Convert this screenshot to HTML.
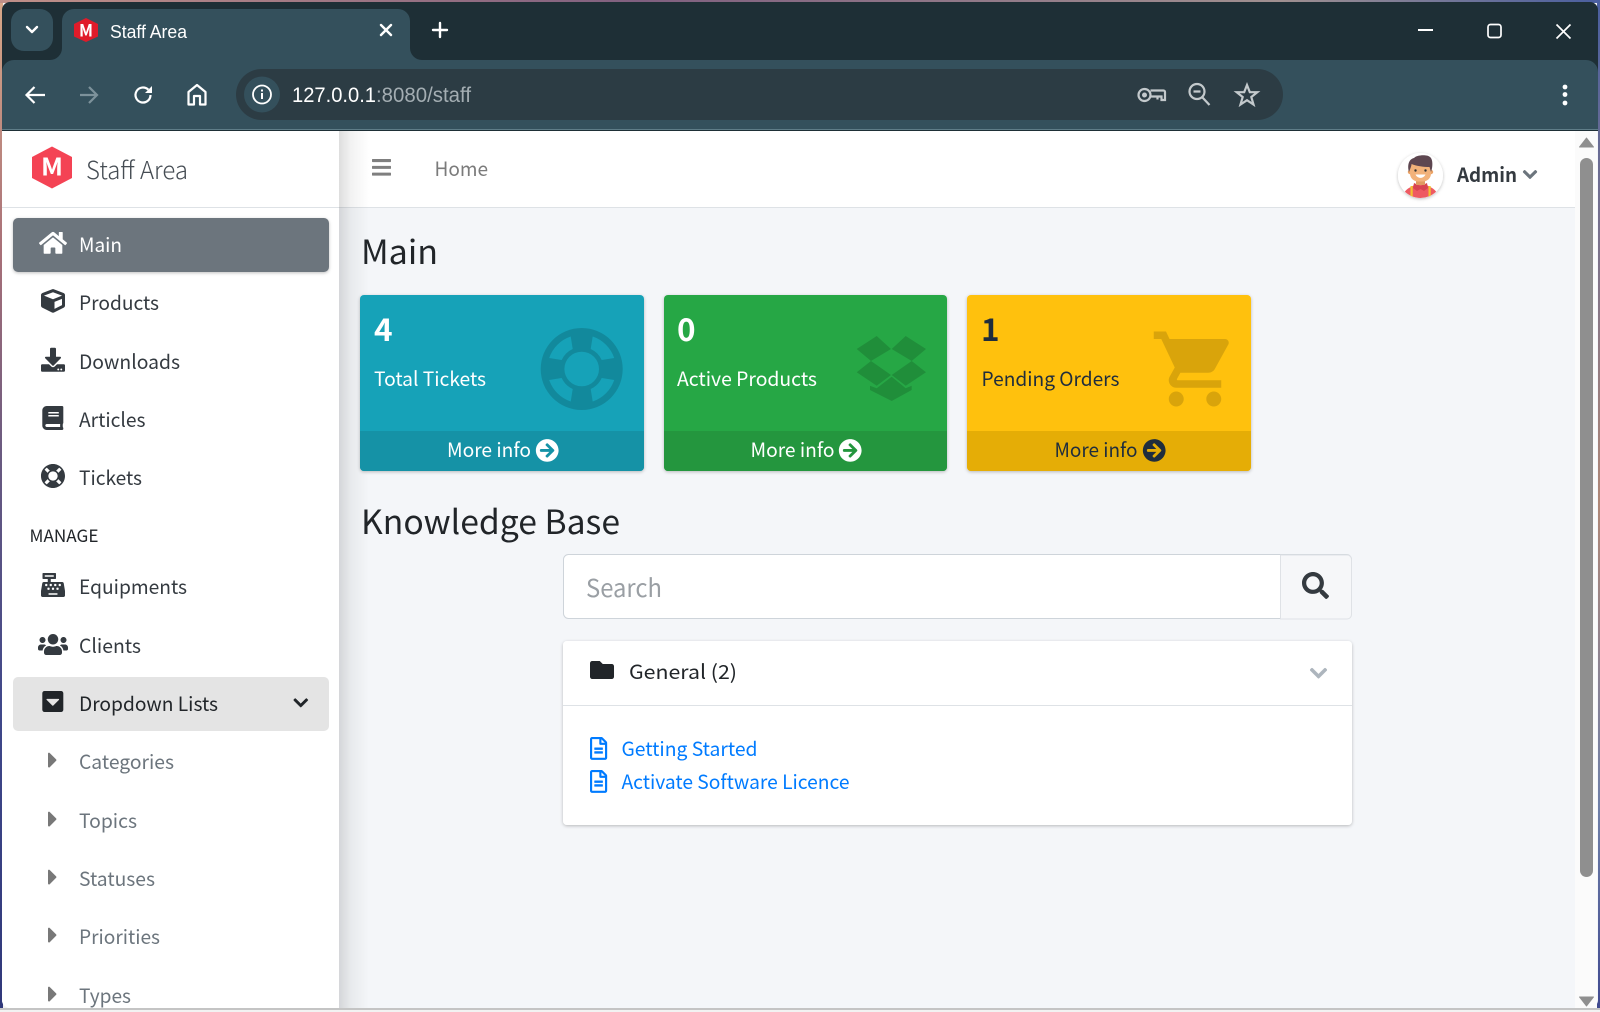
<!DOCTYPE html>
<html><head><meta charset="utf-8"><title>Staff Area</title>
<style>
html,body{margin:0;padding:0;width:1600px;height:1012px;overflow:hidden;background:#fff}
svg{display:block}
text{font-family:"Noto Sans CJK JP","Liberation Sans",sans-serif;font-size:19.7px;fill:#343a40}
.c text{font-family:"Liberation Sans",sans-serif}
</style></head><body>
<svg width="1600" height="1012" viewBox="0 0 1600 1012" xmlns="http://www.w3.org/2000/svg">
<defs>
<linearGradient id="wl" x1="0" y1="0" x2="0" y2="1"><stop offset="0" stop-color="#d8a888"/><stop offset=".25" stop-color="#a87078"/><stop offset=".45" stop-color="#6a5a80"/><stop offset=".7" stop-color="#40488a"/><stop offset="1" stop-color="#30387a"/></linearGradient>
<linearGradient id="wr" x1="0" y1="0" x2="0" y2="1"><stop offset="0" stop-color="#4a5fa0"/><stop offset=".5" stop-color="#b08878"/><stop offset=".8" stop-color="#7080a8"/><stop offset="1" stop-color="#404a90"/></linearGradient>
<linearGradient id="wt" x1="0" y1="0" x2="1" y2="0"><stop offset="0" stop-color="#c09088"/><stop offset=".4" stop-color="#806080"/><stop offset=".8" stop-color="#a09090"/><stop offset="1" stop-color="#4a5fa0"/></linearGradient>
<linearGradient id="sh" x1="0" y1="0" x2="1" y2="0"><stop offset="0" stop-color="#000" stop-opacity=".13"/><stop offset=".4" stop-color="#000" stop-opacity=".05"/><stop offset="1" stop-color="#000" stop-opacity="0"/></linearGradient>
<filter id="ds" x="-5%" y="-5%" width="110%" height="115%"><feDropShadow dx="0" dy="1" stdDeviation="1.5" flood-color="#000" flood-opacity=".25"/></filter>
<clipPath id="win"><path d="M2 10a8 8 0 0 1 8-8H1590a8 8 0 0 1 8 8V1000a8 8 0 0 1-8 8H10a8 8 0 0 1-8-8z"/></clipPath>
<clipPath id="av"><circle cx="1420.5" cy="175.5" r="22.5"/></clipPath>
<clipPath id="sb"><rect x="0" y="131" width="339" height="877"/></clipPath>
</defs>

<rect width="1600" height="1012" fill="#f2f2f2"/>
<rect x="0" y="0" width="3" height="1008" fill="url(#wl)"/>
<rect x="1597" y="0" width="3" height="1008" fill="url(#wr)"/>
<rect x="0" y="0" width="1600" height="3" fill="url(#wt)"/>

<g clip-path="url(#win)">
<rect x="0" y="0" width="1600" height="60" fill="#1e2f36"/>
<rect x="0" y="60" width="1600" height="71" fill="#34505c"/>
<path d="M2 60v12a12 12 0 0 1 12-12zM1598 60v12a12 12 0 0 0-12-12z" fill="#1e2f36"/>
<rect x="0" y="129" width="1600" height="1" fill="#5f7d88"/>
<rect x="0" y="130" width="1600" height="1" fill="#1e2f36"/>

<!-- content bg -->
<rect x="0" y="131" width="1600" height="877" fill="#f4f6f9"/>
<rect x="339" y="131" width="1236" height="76" fill="#fff"/>
<rect x="339" y="207" width="1236" height="1" fill="#dee2e6"/>
<rect x="339" y="131" width="30" height="877" fill="url(#sh)"/>
<rect x="0" y="131" width="339" height="877" fill="#fff"/>
</g>

<!-- chrome tabs -->
<rect x="11" y="9" width="42" height="42" rx="13" fill="#34505c"/>
<path d="M27 27l5 5 5-5" fill="none" stroke="#fff" stroke-width="2.4" stroke-linecap="round" stroke-linejoin="round"/>
<path d="M50 60a12 12 0 0 0 12-12V21a12 12 0 0 1 12-12H398a12 12 0 0 1 12 12V48a12 12 0 0 0 12 12z" fill="#34505c"/>
<path d="M86 18l12 6v12.500L86 42l-12-5.500V24z" fill="#e01b2a"/>
<text x="79" y="36.500" style="font-size:17px;font-weight:700;fill:#fff" textLength="14" lengthAdjust="spacingAndGlyphs">M</text>
<g class="c"><text x="110" y="38" style="font-size:18.400px;fill:#fff" textLength="77" lengthAdjust="spacingAndGlyphs">Staff Area</text></g>
<path d="M381 25l10 10M391 25l-10 10" stroke="#fff" stroke-width="2.400" stroke-linecap="round"/>
<path d="M440 23v14M433 30h14" stroke="#fff" stroke-width="2.400" stroke-linecap="round"/>

<!-- window controls -->
<rect x="1418" y="29" width="15" height="2" fill="#fff"/>
<rect x="1488" y="24.500" width="13" height="13" rx="2.500" fill="none" stroke="#fff" stroke-width="1.700"/>
<path d="M1556.500 24.500l14 14M1570.500 24.500l-14 14" stroke="#fff" stroke-width="1.700"/>

<!-- toolbar -->
<path d="M45 95H27M34.500 87l-8 8 8 8" fill="none" stroke="#fff" stroke-width="2.200"/>
<path d="M80 95h17M89 87l8 8-8 8" fill="none" stroke="#7d929b" stroke-width="2.200"/>
<path d="M150.500 95a7.500 7.500 0 1 1-2.200-5.300" fill="none" stroke="#fff" stroke-width="2.200"/>
<path d="M152 86v7h-7z" fill="#fff"/>
<path d="M188.500 92l8.500-7 8.500 7v12.500H200V96h-6v8.500h-5.500z" fill="none" stroke="#fff" stroke-width="2.200" stroke-linejoin="round"/>
<rect x="236" y="69" width="1047" height="51" rx="25.500" fill="#2c3c44"/>
<circle cx="262" cy="94.500" r="18" fill="#34505c"/>
<circle cx="262" cy="94.500" r="9" fill="none" stroke="#fff" stroke-width="1.800"/>
<rect x="261" y="93" width="2" height="6" fill="#fff"/><rect x="261" y="89.500" width="2" height="2" fill="#fff"/>
<g class="c"><text x="292" y="102" style="font-size:21.500px;fill:#fff" textLength="84" lengthAdjust="spacingAndGlyphs">127.0.0.1</text>
<text x="376" y="102" style="font-size:21.500px;fill:#a3adb2" textLength="95" lengthAdjust="spacingAndGlyphs">:8080/staff</text></g>
<g fill="none" stroke="#c3c9cc" stroke-width="2.200">
<circle cx="1144.500" cy="95" r="6"/><circle cx="1144.500" cy="95" r="1.400" fill="#c3c9cc"/><path d="M1150.500 90.500h13a1.500 1.500 0 0 1 1.500 1.500v8h-3.500v-3.500h-4v3M1150.500 96.500h7"/>
<circle cx="1197" cy="91.500" r="7.500"/><path d="M1193.500 91.500h7M1202.500 97.500l7 7.500"/>
<path d="M1247 85l2.800 7.200h7.500l-6 4.800 2.200 7.500-6.500-4.300-6.500 4.300 2.200-7.500-6-4.800h7.500z"/>
</g>
<circle cx="1565" cy="87" r="2.400" fill="#fff"/><circle cx="1565" cy="94.500" r="2.400" fill="#fff"/><circle cx="1565" cy="103" r="2.400" fill="#fff"/>

<!-- navbar -->
<path transform="translate(372,156.500) scale(.0424)" fill="#7f7f7f" d="M16 132h416c8.837 0 16-7.163 16-16V76c0-8.837-7.163-16-16-16H16C7.163 60 0 67.163 0 76v40c0 8.837 7.163 16 16 16zm0 160h416c8.837 0 16-7.163 16-16v-40c0-8.837-7.163-16-16-16H16c-8.837 0-16 7.163-16 16v40c0 8.837 7.163 16 16 16zm0 160h416c8.837 0 16-7.163 16-16v-40c0-8.837-7.163-16-16-16H16c-8.837 0-16 7.163-16 16v40c0 8.837 7.163 16 16 16z"/>
<text x="434.500" y="176" style="fill:#7b7b7b" textLength="53.500" lengthAdjust="spacingAndGlyphs">Home</text>

<circle cx="1420.500" cy="175.500" r="22.500" fill="#fff" filter="url(#ds)"/>
<g clip-path="url(#av)">
<path d="M1402 199c1-6 4-10 9-12l5-3h9l5 3c5 2 8 6 9 12z" fill="#ee5a62"/>
<rect x="1410.500" y="186" width="2.200" height="14" fill="#f2c230"/><rect x="1428.500" y="186" width="2.200" height="14" fill="#f2c230"/>
<path d="M1414 183l6.500 3 6.500-3 1 5-4 3-3.500-2-3.500 2-4-3z" fill="#d84450"/>
<rect x="1416" y="176" width="9" height="9" fill="#e09a60"/>
<circle cx="1410" cy="172" r="2.200" fill="#eba467"/><circle cx="1431" cy="172" r="2.200" fill="#eba467"/>
<rect x="1410" y="160" width="21" height="21.500" rx="8" fill="#f2b27a"/>
<path d="M1409 172c-2-7 0-13 5-14 2-3 13-4 16-1 3 2 3 10 1 15l-1.500-5c-6 0-13-1-18-3 0 2-1 4-2.500 8z" fill="#5d4650"/>
<circle cx="1415.500" cy="170.500" r="1.200" fill="#333"/><circle cx="1425.500" cy="170.500" r="1.200" fill="#333"/>
<path d="M1415.500 174.500c2 4.500 8 4.500 10 0z" fill="#fff"/>
</g>
<text x="1457" y="182" style="font-weight:700;fill:#343a40" textLength="60" lengthAdjust="spacingAndGlyphs">Admin</text>
<path transform="translate(1523,166.500) scale(.0313)" fill="#6c757d" stroke="#6c757d" stroke-width="20" d="M207.029 381.476L12.686 187.132c-9.373-9.373-9.373-24.569 0-33.941l22.667-22.667c9.357-9.357 24.522-9.375 33.901-.04L224 284.505l154.745-154.021c9.379-9.335 24.544-9.317 33.901.04l22.667 22.667c9.373 9.373 9.373 24.569 0 33.941L240.971 381.476c-9.373 9.372-24.569 9.372-33.942 0z"/>

<!-- sidebar -->
<path d="M52 146.500l20 10.500v21L52 188.500 32 178v-21z" fill="#f44354"/>
<text x="41" y="175.500" style="font-size:24.500px;font-weight:700;fill:#fff" textLength="22" lengthAdjust="spacingAndGlyphs">M</text>
<text x="86" y="179" style="font-size:24.500px;font-weight:300;fill:#454c53" textLength="102" lengthAdjust="spacingAndGlyphs">Staff Area</text>
<rect x="2" y="207" width="337" height="1" fill="#dee2e6"/>
<rect x="13" y="218" width="316" height="54" rx="5" fill="#6c757d" filter="url(#ds)"/>
<path transform="translate(39,230.400) scale(.0486)" fill="#fff" d="M280.370 148.260L96 300.110V464a16 16 0 0 0 16 16l112.060-.29a16 16 0 0 0 15.920-16V368a16 16 0 0 1 16-16h64a16 16 0 0 1 16 16v95.640a16 16 0 0 0 16 16.050L464 480a16 16 0 0 0 16-16V300L295.670 148.260a12.190 12.190 0 0 0-15.300 0zM571.600 251.470L488 182.560V44.050a12 12 0 0 0-12-12h-56a12 12 0 0 0-12 12v72.610L318.470 43a48 48 0 0 0-61 0L4.340 251.470a12 12 0 0 0-1.600 16.900l25.500 31A12 12 0 0 0 45.150 301l235.220-193.740a12.190 12.190 0 0 1 15.300 0L530.900 301a12 12 0 0 0 16.900-1.600l25.500-31a12 12 0 0 0-1.700-16.930z"/>
<text x="79" y="252" style="fill:#fff" textLength="43" lengthAdjust="spacingAndGlyphs">Main</text>

<path transform="translate(41,289) scale(.0469)" fill="#343a40" d="M239.100 6.300l-208 78c-18.700 7-31.100 25-31.100 45v225.100c0 18.200 10.300 34.800 26.500 42.900l208 104c13.500 6.800 29.400 6.800 42.900 0l208-104c16.300-8.100 26.500-24.800 26.500-42.900V129.300c0-20-12.400-37.900-31.100-44.900l-208-78C262 2.200 250 2.200 239.100 6.300zM256 68.400l192 72v1.100l-192 78-192-78v-1.100l192-72zm32 356V275.500l160-65v133.900l-160 80z"/>
<text x="79" y="310" textLength="80" lengthAdjust="spacingAndGlyphs">Products</text>

<path transform="translate(41,347.700) scale(.0469)" fill="#343a40" d="M216 0h80c13.300 0 24 10.700 24 24v168h87.700c17.800 0 26.700 21.500 14.100 34.100L269.700 378.300c-7.500 7.500-19.800 7.500-27.300 0L90.100 226.100c-12.600-12.600-3.700-34.100 14.100-34.100H192V24c0-13.300 10.700-24 24-24zm296 376v112c0 13.300-10.700 24-24 24H24c-13.300 0-24-10.700-24-24V376c0-13.300 10.700-24 24-24h146.700l49 49c20.100 20.100 52.500 20.100 72.600 0l49-49H488c13.300 0 24 10.700 24 24zm-124 88c0-11-9-20-20-20s-20 9-20 20 9 20 20 20 20-9 20-20zm64 0c0-11-9-20-20-20s-20 9-20 20 9 20 20 20 20-9 20-20z"/>
<text x="79" y="369" textLength="101" lengthAdjust="spacingAndGlyphs">Downloads</text>

<path transform="translate(42.300,406) scale(.0469)" fill="#343a40" d="M448 360V24c0-13.300-10.700-24-24-24H96C43 0 0 43 0 96v320c0 53 43 96 96 96h328c13.300 0 24-10.700 24-24v-16c0-7.500-3.500-14.300-8.900-18.700-4.200-15.400-4.200-59.300 0-74.700 5.400-4.300 8.900-11.100 8.900-18.600zM128 134c0-3.300 2.700-6 6-6h212c3.300 0 6 2.700 6 6v20c0 3.300-2.700 6-6 6H134c-3.300 0-6-2.700-6-6v-20zm0 64c0-3.300 2.700-6 6-6h212c3.300 0 6 2.700 6 6v20c0 3.300-2.700 6-6 6H134c-3.300 0-6-2.700-6-6v-20zm253.400 250H96c-17.700 0-32-14.300-32-32 0-17.600 14.400-32 32-32h285.400c-1.900 17.100-1.900 46.900 0 64z"/>
<text x="79" y="427" textLength="66.500" lengthAdjust="spacingAndGlyphs">Articles</text>

<path transform="translate(40.600,463.600) scale(.0484)" fill="#343a40" d="M256 8C119.033 8 8 119.033 8 256s111.033 248 248 248 248-111.033 248-248S392.967 8 256 8zm173.696 119.559l-63.399 63.399c-10.987-18.559-26.670-34.252-45.255-45.255l63.399-63.399a218.396 218.396 0 0 1 45.255 45.255zM256 352c-53.019 0-96-42.981-96-96s42.981-96 96-96 96 42.981 96 96-42.981 96-96 96zM127.559 82.304l63.399 63.399c-18.559 10.987-34.252 26.670-45.255 45.255l-63.399-63.399a218.372 218.372 0 0 1 45.255-45.255zM82.304 384.441l63.399-63.399c10.987 18.559 26.670 34.252 45.255 45.255l-63.399 63.399a218.396 218.396 0 0 1-45.255-45.255zm302.137 45.255l-63.399-63.399c18.559-10.987 34.252-26.670 45.255-45.255l63.399 63.399a218.403 218.403 0 0 1-45.255 45.255z"/>
<text x="79" y="485" textLength="63" lengthAdjust="spacingAndGlyphs">Tickets</text>

<text x="29.500" y="542" style="font-size:17px;fill:#212529" textLength="69" lengthAdjust="spacingAndGlyphs">MANAGE</text>

<path transform="translate(41,573) scale(.0469)" fill="#343a40" d="M511.100 378.800l-26.700-160c-2.600-15.400-15.900-26.700-31.600-26.700H208v-64h96c8.800 0 16-7.200 16-16V16c0-8.800-7.200-16-16-16H48c-8.800 0-16 7.200-16 16v96c0 8.800 7.200 16 16 16h96v64H59.100c-15.600 0-29 11.300-31.600 26.700L.8 378.700c-.5 2.900-.8 5.900-.8 8.900V480c0 17.700 14.300 32 32 32h448c17.700 0 32-14.300 32-32v-92.400c0-3-.3-5.900-.9-8.800zM280 248c0-8.800 7.200-16 16-16h16c8.800 0 16 7.200 16 16v16c0 8.800-7.200 16-16 16h-16c-8.800 0-16-7.200-16-16v-16zm-32 64h16c8.800 0 16 7.200 16 16v16c0 8.800-7.200 16-16 16h-16c-8.800 0-16-7.200-16-16v-16c0-8.800 7.200-16 16-16zm-32-80c8.800 0 16 7.200 16 16v16c0 8.800-7.200 16-16 16h-16c-8.800 0-16-7.200-16-16v-16c0-8.800 7.200-16 16-16h16zM80 80V48h192v32H80zm40 200h-16c-8.800 0-16-7.200-16-16v-16c0-8.800 7.200-16 16-16h16c8.800 0 16 7.200 16 16v16c0 8.800-7.200 16-16 16zm16 64v-16c0-8.800 7.200-16 16-16h16c8.800 0 16 7.200 16 16v16c0 8.800-7.200 16-16 16h-16c-8.800 0-16-7.200-16-16zm216 112c0 4.400-3.600 8-8 8H168c-4.400 0-8-3.600-8-8v-16c0-4.400 3.600-8 8-8h176c4.400 0 8 3.600 8 8v16zm24-112c0 8.800-7.200 16-16 16h-16c-8.800 0-16-7.200-16-16v-16c0-8.800 7.200-16 16-16h16c8.800 0 16 7.200 16 16v16zm48-80c0 8.800-7.200 16-16 16h-16c-8.800 0-16-7.200-16-16v-16c0-8.800 7.200-16 16-16h16c8.800 0 16 7.200 16 16v16z"/>
<text x="79" y="594" textLength="108" lengthAdjust="spacingAndGlyphs">Equipments</text>

<path transform="translate(38,632.500) scale(.0469)" fill="#343a40" d="M96 224c35.300 0 64-28.700 64-64s-28.700-64-64-64-64 28.700-64 64 28.700 64 64 64zm448 0c35.300 0 64-28.700 64-64s-28.700-64-64-64-64 28.700-64 64 28.700 64 64 64zm32 32h-64c-17.600 0-33.500 7.100-45.100 18.600 40.300 22.100 68.900 62 75.100 109.400h66c17.700 0 32-14.300 32-32v-32c0-35.300-28.700-64-64-64zm-256 0c61.900 0 112-50.100 112-112S381.900 32 320 32 208 82.100 208 144s50.100 112 112 112zm76.800 32h-8.300c-20.800 10-43.900 16-68.500 16s-47.600-6-68.500-16h-8.300C179.600 288 128 339.600 128 403.200V432c0 26.500 21.500 48 48 48h288c26.500 0 48-21.500 48-48v-28.800c0-63.600-51.600-115.200-115.200-115.200zm-223.700-13.400C161.500 263.100 145.600 256 128 256H64c-35.300 0-64 28.700-64 64v32c0 17.700 14.300 32 32 32h65.900c6.300-47.400 34.900-87.300 75.200-109.400z"/>
<text x="79" y="653" textLength="62" lengthAdjust="spacingAndGlyphs">Clients</text>

<rect x="13" y="677" width="316" height="54" rx="5" fill="#e4e4e4"/>
<path transform="translate(42.300,689.500) scale(.0469)" fill="#212529" d="M448 80v352c0 26.510-21.490 48-48 48H48c-26.510 0-48-21.490-48-48V80c0-26.510 21.490-48 48-48h352c26.510 0 48 21.490 48 48zM92.500 220.500l123 123c4.700 4.700 12.300 4.700 17 0l123-123c7.600-7.600 2.200-20.500-8.500-20.500H101c-10.700 0-16.100 12.900-8.500 20.500z"/>
<text x="79" y="711" style="fill:#212529" textLength="139" lengthAdjust="spacingAndGlyphs">Dropdown Lists</text>
<path transform="translate(293.500,694.500) scale(.0325)" fill="#212529" stroke="#212529" stroke-width="14" d="M207.029 381.476L12.686 187.132c-9.373-9.373-9.373-24.569 0-33.941l22.667-22.667c9.357-9.357 24.522-9.375 33.901-.04L224 284.505l154.745-154.021c9.379-9.335 24.544-9.317 33.901.04l22.667 22.667c9.373 9.373 9.373 24.569 0 33.941L240.971 381.476c-9.373 9.372-24.569 9.372-33.942 0z"/>

<g clip-path="url(#sb)">
<g fill="#787878">
<path transform="translate(48,747.300) scale(.05)" d="M0 384.662V127.338c0-17.818 21.543-26.741 34.142-14.142l128.662 128.662c7.810 7.810 7.810 20.474 0 28.284L34.142 398.804C21.543 411.404 0 402.480 0 384.662z"/>
<path transform="translate(48,806.300) scale(.05)" d="M0 384.662V127.338c0-17.818 21.543-26.741 34.142-14.142l128.662 128.662c7.810 7.810 7.810 20.474 0 28.284L34.142 398.804C21.543 411.404 0 402.480 0 384.662z"/>
<path transform="translate(48,864.300) scale(.05)" d="M0 384.662V127.338c0-17.818 21.543-26.741 34.142-14.142l128.662 128.662c7.810 7.810 7.810 20.474 0 28.284L34.142 398.804C21.543 411.404 0 402.480 0 384.662z"/>
<path transform="translate(48,922.300) scale(.05)" d="M0 384.662V127.338c0-17.818 21.543-26.741 34.142-14.142l128.662 128.662c7.810 7.810 7.810 20.474 0 28.284L34.142 398.804C21.543 411.404 0 402.480 0 384.662z"/>
<path transform="translate(48,981.300) scale(.05)" d="M0 384.662V127.338c0-17.818 21.543-26.741 34.142-14.142l128.662 128.662c7.810 7.810 7.810 20.474 0 28.284L34.142 398.804C21.543 411.404 0 402.480 0 384.662z"/>
</g>
<text x="79" y="769" style="fill:#6c757d" textLength="95" lengthAdjust="spacingAndGlyphs">Categories</text>
<text x="79" y="828" style="fill:#6c757d" textLength="58" lengthAdjust="spacingAndGlyphs">Topics</text>
<text x="79" y="886" style="fill:#6c757d" textLength="76" lengthAdjust="spacingAndGlyphs">Statuses</text>
<text x="79" y="944" style="fill:#6c757d" textLength="81" lengthAdjust="spacingAndGlyphs">Priorities</text>
<text x="79" y="1003" style="fill:#6c757d" textLength="52" lengthAdjust="spacingAndGlyphs">Types</text>
</g>

<!-- main -->
<text x="361" y="264" style="font-size:33.200px;fill:#212529" textLength="77" lengthAdjust="spacingAndGlyphs">Main</text>

<rect x="360" y="295" width="284" height="176" rx="4" fill="#17a2b8" filter="url(#ds)"/>
<path d="M360 431h284v36a4 4 0 0 1-4 4H364a4 4 0 0 1-4-4z" fill="#1592a6"/>
<path transform="translate(581.700,369)" fill="#000" fill-opacity=".15" fill-rule="evenodd" d="M-41 0a41 41 0 1 0 82 0a41 41 0 1 0-82 0zM-17.300 0a17.300 17.300 0 1 0 34.600 0a17.300 17.300 0 1 0-34.600 0zM-11-32.500A34.300 34.300 0 0 0-32.500-11L-20-9A22 22 0 0 1-9-20zM11-32.500A34.300 34.300 0 0 1 32.500-11L20-9A22 22 0 0 0 9-20zM32.500 11A34.300 34.300 0 0 1 11 32.500L9 20A22 22 0 0 0 20 9zM-11 32.500A34.300 34.300 0 0 1-32.500 11L-20 9A22 22 0 0 0-9 20z"/>
<text x="374" y="341" style="font-size:31.500px;font-weight:700;fill:#fff">4</text>
<text x="374" y="386" style="fill:#fff" textLength="112" lengthAdjust="spacingAndGlyphs">Total Tickets</text>
<text x="447" y="457" style="fill:#fff" textLength="84" lengthAdjust="spacingAndGlyphs">More info</text>
<path transform="translate(535.500,438.700) scale(.0458)" fill="#fff" d="M256 8c137 0 248 111 248 248S393 504 256 504 8 393 8 256 119 8 256 8zm-28.900 143.600l75.500 72.400H120c-13.300 0-24 10.700-24 24v16c0 13.300 10.700 24 24 24h182.600l-75.500 72.400c-9.700 9.300-9.900 24.800-.4 34.300l11 10.900c9.400 9.400 24.600 9.400 33.900 0L404.300 273c9.400-9.400 9.400-24.600 0-33.900L271.600 106.300c-9.400-9.400-24.600-9.400-33.900 0l-11 10.900c-9.500 9.600-9.300 25.100.4 34.400z"/>

<rect x="664" y="295" width="283" height="176" rx="4" fill="#28a745" filter="url(#ds)"/>
<path d="M664 431h283v36a4 4 0 0 1-4 4H668a4 4 0 0 1-4-4z" fill="#24963e"/>
<path fill="#000" fill-opacity=".15" d="M856.700 349l20-13 14.300 13-20 12zM891.700 349l14-13 20.300 13-14.300 12zM871 361l20 14-14.300 10.700-20-13.400zM911.700 361l14.300 11.300-20.300 13.400-14-10.700zM870 385.700l6.700 2.600 15-11.600 14 11.600 6-2.600V390l-20 11-21.700-11z"/>
<text x="677" y="341" style="font-size:31.500px;font-weight:700;fill:#fff">0</text>
<text x="677" y="386" style="fill:#fff" textLength="140" lengthAdjust="spacingAndGlyphs">Active Products</text>
<text x="750.500" y="457" style="fill:#fff" textLength="84" lengthAdjust="spacingAndGlyphs">More info</text>
<path transform="translate(838.500,438.700) scale(.0458)" fill="#fff" d="M256 8c137 0 248 111 248 248S393 504 256 504 8 393 8 256 119 8 256 8zm-28.900 143.600l75.500 72.400H120c-13.300 0-24 10.700-24 24v16c0 13.300 10.700 24 24 24h182.600l-75.500 72.400c-9.700 9.300-9.900 24.800-.4 34.300l11 10.900c9.400 9.400 24.600 9.400 33.900 0L404.300 273c9.400-9.400 9.400-24.600 0-33.900L271.600 106.300c-9.400-9.400-24.600-9.400-33.900 0l-11 10.900c-9.500 9.600-9.300 25.100.4 34.400z"/>

<rect x="967" y="295" width="284" height="176" rx="4" fill="#ffc107" filter="url(#ds)"/>
<path d="M967 431h284v36a4 4 0 0 1-4 4H971a4 4 0 0 1-4-4z" fill="#e5ad06"/>
<path transform="translate(1150,324) scale(3.75)" fill="#000" fill-opacity=".15" d="M7 18c-1.100 0-1.990.9-1.990 2S5.900 22 7 22s2-.9 2-2-.9-2-2-2zM1 2v2h2l3.600 7.590-1.350 2.450c-.16.28-.25.61-.25.96 0 1.100.9 2 2 2h12v-2H7.420c-.14 0-.25-.11-.25-.25l.03-.12.9-1.630h7.450c.75 0 1.410-.41 1.750-1.030l3.580-6.490c.08-.14.12-.31.12-.48 0-.55-.45-1-1-1H5.210l-.94-2H1zm16 16c-1.100 0-1.990.9-1.990 2s.89 2 1.990 2 2-.9 2-2-.9-2-2-2z"/>
<text x="981" y="341" style="font-size:31.500px;font-weight:700;fill:#1f2d3d">1</text>
<text x="981.500" y="386" style="fill:#1f2d3d" textLength="138" lengthAdjust="spacingAndGlyphs">Pending Orders</text>
<text x="1054.500" y="457" style="fill:#1f2d3d" textLength="83" lengthAdjust="spacingAndGlyphs">More info</text>
<path transform="translate(1142.500,438.700) scale(.0458)" fill="#1f2d3d" d="M256 8c137 0 248 111 248 248S393 504 256 504 8 393 8 256 119 8 256 8zm-28.900 143.600l75.500 72.400H120c-13.300 0-24 10.700-24 24v16c0 13.300 10.700 24 24 24h182.600l-75.500 72.400c-9.700 9.300-9.900 24.800-.4 34.300l11 10.900c9.400 9.400 24.600 9.400 33.900 0L404.300 273c9.400-9.400 9.400-24.600 0-33.900L271.600 106.300c-9.400-9.400-24.600-9.400-33.900 0l-11 10.900c-9.500 9.600-9.300 25.100.4 34.400z"/>

<text x="361" y="534" style="font-size:33.200px;fill:#212529" textLength="259" lengthAdjust="spacingAndGlyphs">Knowledge Base</text>

<!-- search -->
<rect x="563.500" y="554.500" width="788" height="64" rx="5" fill="#fff" stroke="#ced4da"/>
<path d="M1280.500 555H1347a4.500 4.500 0 0 1 4.500 4.500v55a4.500 4.500 0 0 1-4.500 4.500H1280.500z" fill="#f6f7f9" stroke="#dfe2e6"/>
<text x="586" y="597" style="font-size:24.500px;fill:#9a9fa4" textLength="76" lengthAdjust="spacingAndGlyphs">Search</text>
<path transform="translate(1302,572) scale(.0527)" fill="#343a40" d="M505 442.700L405.300 343c-4.500-4.500-10.600-7-17-7H372c27.600-35.300 44-79.700 44-128C416 93.100 322.900 0 208 0S0 93.100 0 208s93.100 208 208 208c48.300 0 92.700-16.400 128-44v16.300c0 6.400 2.500 12.500 7 17l99.700 99.700c9.400 9.400 24.600 9.400 33.900 0l28.300-28.300c9.400-9.400 9.400-24.600.1-34zM208 336c-70.700 0-128-57.200-128-128 0-70.700 57.200-128 128-128 70.700 0 128 57.200 128 128 0 70.700-57.200 128-128 128z"/>

<!-- kb card -->
<rect x="563" y="641" width="789" height="184" rx="4" fill="#fff" filter="url(#ds)"/>
<rect x="563" y="705" width="789" height="1" fill="#dee2e6"/>
<path transform="translate(590,658) scale(.0469)" fill="#212529" d="M464 128H272l-64-64H48C21.490 64 0 85.490 0 112v288c0 26.510 21.490 48 48 48h416c26.510 0 48-21.490 48-48V176c0-26.510-21.490-48-48-48z"/>
<text x="629" y="679" style="fill:#212529" textLength="108" lengthAdjust="spacingAndGlyphs">General (2)</text>
<path transform="translate(1310,663.500) scale(.038)" fill="#adb5bd" stroke="#adb5bd" stroke-width="14" d="M207.029 381.476L12.686 187.132c-9.373-9.373-9.373-24.569 0-33.941l22.667-22.667c9.357-9.357 24.522-9.375 33.901-.04L224 284.505l154.745-154.021c9.379-9.335 24.544-9.317 33.901.04l22.667 22.667c9.373 9.373 9.373 24.569 0 33.941L240.971 381.476c-9.373 9.372-24.569 9.372-33.942 0z"/>
<path transform="translate(590,737) scale(.0447)" fill="#007bff" d="M288 248v28c0 6.600-5.400 12-12 12H108c-6.600 0-12-5.400-12-12v-28c0-6.600 5.400-12 12-12h168c6.600 0 12 5.400 12 12zm-12 72H108c-6.600 0-12 5.400-12 12v28c0 6.600 5.400 12 12 12h168c6.600 0 12-5.400 12-12v-28c0-6.600-5.400-12-12-12zm108-188.100V464c0 26.500-21.500 48-48 48H48c-26.500 0-48-21.500-48-48V48C0 21.500 21.500 0 48 0h204.100C264.800 0 277 5.100 286 14.100L369.900 98c9 8.900 14.100 21.200 14.100 33.900zm-128-80V128h76.100L256 51.900zM336 464V176H232c-13.300 0-24-10.700-24-24V48H48v416h288z"/>
<text x="621.500" y="756" style="fill:#007bff" textLength="136" lengthAdjust="spacingAndGlyphs">Getting Started</text>
<path transform="translate(590,770) scale(.0447)" fill="#007bff" d="M288 248v28c0 6.600-5.400 12-12 12H108c-6.600 0-12-5.400-12-12v-28c0-6.600 5.400-12 12-12h168c6.600 0 12 5.400 12 12zm-12 72H108c-6.600 0-12 5.400-12 12v28c0 6.600 5.400 12 12 12h168c6.600 0 12-5.400 12-12v-28c0-6.600-5.400-12-12-12zm108-188.100V464c0 26.500-21.500 48-48 48H48c-26.500 0-48-21.500-48-48V48C0 21.500 21.500 0 48 0h204.100C264.800 0 277 5.100 286 14.100L369.900 98c9 8.900 14.100 21.200 14.100 33.900zm-128-80V128h76.100L256 51.900zM336 464V176H232c-13.300 0-24-10.700-24-24V48H48v416h288z"/>
<text x="621.500" y="789" style="fill:#007bff" textLength="228" lengthAdjust="spacingAndGlyphs">Activate Software Licence</text>

<!-- scrollbar -->
<rect x="1575" y="131" width="22" height="877" fill="#fbfbfb"/>
<path d="M1586.500 138l7 9h-14z" fill="#8f8f8f" stroke="#8f8f8f" stroke-linejoin="round"/>
<rect x="1580" y="158" width="13" height="719" rx="6.500" fill="#8f8f8f"/>
<path d="M1586.500 1006l7-9h-14z" fill="#8f8f8f" stroke="#8f8f8f" stroke-linejoin="round"/>

<rect x="0" y="1008" width="1600" height="2" fill="#c4c4c4"/>
</svg>
</body></html>
